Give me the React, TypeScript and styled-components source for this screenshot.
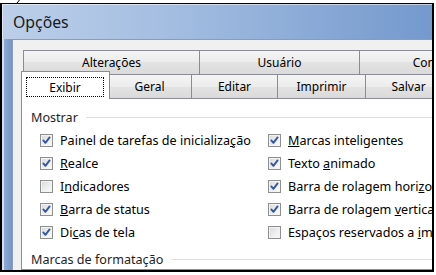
import React from "react";
import styled, { createGlobalStyle } from "styled-components";

const GlobalStyle = createGlobalStyle`
  html, body {
    margin: 0;
    padding: 0;
    background: #fff;
  }
  body {
    font-family: "Noto Sans", "Open Sans", sans-serif;
    font-size: 12px;
    color: #000;
  }
`;

const Screen = styled.div`
  width: 436px;
  height: 275px;
  overflow: hidden;
  background: #fff;
`;

const StrayMark = styled.svg`
  display: block;
  margin-left: 16px;
`;

const Frame = styled.div`
  width: 430px;
  height: 266px;
  border: 2px solid #000;
  border-top-width: 1px;
  overflow: hidden;
  display: flex;
  flex-direction: column;
  background: linear-gradient(90deg, #bccfe9 0%, #a3bde1 40%, #7499cd 100%);
`;

const TitleBar = styled.div`
  flex: none;
  height: 35px;
  display: flex;
  align-items: center;
  padding-left: 11px;
  font-size: 15.8px;
  color: #1a1a1a;
  box-shadow: inset 1px 1px 0 rgba(255, 255, 255, 0.55);
`;

const Body = styled.div`
  flex: 1;
  display: flex;
  min-height: 0;
`;

const SideEdge = styled.div`
  flex: none;
  width: 10px;
  background: linear-gradient(90deg, #d3dfef 0 2px, #8eaad5 2px, #7296ca 10px);
`;

const Client = styled.div`
  flex: 1;
  min-width: 0;
  background: #f0f0f0;
  border-left: 1px solid #8e9cb0;
  border-top: 1px solid #8e9cb0;
  padding: 10px 0 0 8px;
  display: flex;
  flex-direction: column;
`;

const TabStrip = styled.div`
  flex: 1;
  display: flex;
  flex-direction: column;
  min-height: 0;
`;

const TabRow = styled.div`
  flex: none;
  display: flex;
  height: 24px;
  padding-left: 2px;
`;

const Tab = styled.div<{ $w: number; $active?: boolean }>`
  flex: none;
  box-sizing: border-box;
  width: ${(p) => (p.$active ? p.$w + 4 : p.$w)}px;
  margin: ${(p) => (p.$active ? "-3px -3px -1px -2px" : "0 -1px 0 0")};
  position: relative;
  z-index: ${(p) => (p.$active ? 1 : 0)};
  border: 1px solid #898c95;
  border-bottom: none;
  background: ${(p) =>
    p.$active
      ? "#fff"
      : "linear-gradient(#f4f4f4 0%, #ececec 50%, #e3e3e3 50%, #dadada 100%)"};
  display: flex;
  justify-content: center;
  align-items: ${(p) => (p.$active ? "flex-start" : "center")};
  white-space: nowrap;
  overflow: hidden;
`;

const FocusRing = styled.span`
  box-sizing: border-box;
  width: calc(100% - 9px);
  height: 20px;
  margin-top: 5px;
  margin-left: -1px;
  border: 1px dotted #000;
  display: flex;
  align-items: center;
  justify-content: center;
`;

const Panel = styled.div`
  flex: 1;
  background: #fff;
  border: 1px solid #898c95;
  border-right: none;
  padding: 11px 0 0 9px;
  font-size: 12.6px;
`;

const GroupHeader = styled.div<{ $gap?: number }>`
  display: flex;
  align-items: center;
  height: 15px;
  line-height: 15px;
  margin-top: ${(p) => p.$gap ?? 0}px;
  color: #1e1e1e;
  white-space: nowrap;
`;

const Rule = styled.span`
  flex: 1;
  height: 1px;
  margin-left: 8px;
  background: #d5dfe5;
`;

const CheckGrid = styled.div`
  display: grid;
  grid-template-columns: 228px auto;
  margin-top: 4px;
  padding-left: 9px;
`;

const CheckRow = styled.label`
  display: flex;
  align-items: center;
  gap: 7px;
  height: 23px;
  white-space: nowrap;
`;

const Box = styled.span`
  flex: none;
  box-sizing: border-box;
  width: 13px;
  height: 13px;
  border: 1px solid #8e8f8f;
  background: linear-gradient(135deg, #d6d8db 0%, #eeeeee 55%, #fbfbfb 100%);
  box-shadow: inset 0 0 0 1px #f3f3f3;
  display: flex;
`;

const Check = styled.svg`
  display: block;
`;

type Item = { label: React.ReactNode; checked: boolean };

const leftItems: Item[] = [
  { label: <>Painel de tarefas de inicializa<u>ç</u>ão</>, checked: true },
  { label: <><u>R</u>ealce</>, checked: true },
  { label: <>I<u>n</u>dicadores</>, checked: false },
  { label: <><u>B</u>arra de status</>, checked: true },
  { label: <>Di<u>c</u>as de tela</>, checked: true },
];

const rightItems: Item[] = [
  { label: <><u>M</u>arcas inteligentes</>, checked: true },
  { label: <>Texto <u>a</u>nimado</>, checked: true },
  { label: <>Barra de rolagem hori<u>z</u>ontal</>, checked: true },
  { label: <>Barra de rolagem <u>v</u>ertical</>, checked: true },
  { label: <>Espaços reservados a <u>i</u>magens</>, checked: false },
];

const CheckBox: React.FC<Item> = ({ label, checked }) => (
  <CheckRow>
    <Box>
      {checked && (
        <Check width="11" height="11" viewBox="0 0 11 11">
          <path
            d="M2.3 5.4 L4.4 7.8 L8.6 2.4"
            fill="none"
            stroke="#3558a3"
            strokeWidth="1.9"
            strokeLinecap="round"
            strokeLinejoin="round"
          />
        </Check>
      )}
    </Box>
    <span>{label}</span>
  </CheckRow>
);

const backTabs = [
  { label: "Alterações", w: 177 },
  { label: "Usuário", w: 161 },
  { label: "Compatibilidade", w: 200 },
];

const frontTabs = [
  { label: "Exibir", w: 85 },
  { label: "Geral", w: 85 },
  { label: "Editar", w: 87 },
  { label: "Imprimir", w: 89 },
  { label: "Salvar", w: 87 },
];

const App: React.FC = () => {
  const rows = leftItems.map((item, i) => [item, rightItems[i]]);

  return (
    <Screen>
      <GlobalStyle />
      <StrayMark width="6" height="3" viewBox="0 0 6 3">
        <path d="M1 3 L3.5 0" stroke="#000" strokeWidth="1" />
      </StrayMark>
      <Frame>
        <TitleBar>Opções</TitleBar>
        <Body>
          <SideEdge />
          <Client>
            <TabStrip>
              <TabRow>
                {backTabs.map((t) => (
                  <Tab key={t.label} $w={t.w}>
                    {t.label}
                  </Tab>
                ))}
              </TabRow>
              <TabRow>
                {frontTabs.map((t, i) =>
                  i === 0 ? (
                    <Tab key={t.label} $w={t.w} $active>
                      <FocusRing>{t.label}</FocusRing>
                    </Tab>
                  ) : (
                    <Tab key={t.label} $w={t.w}>
                      {t.label}
                    </Tab>
                  )
                )}
              </TabRow>
              <Panel>
                <GroupHeader>
                  Mostrar
                  <Rule />
                </GroupHeader>
                <CheckGrid>
                  {rows.map(([l, r], i) => (
                    <React.Fragment key={i}>
                      <CheckBox {...l} />
                      <CheckBox {...r} />
                    </React.Fragment>
                  ))}
                </CheckGrid>
                <GroupHeader $gap={8}>
                  Marcas de formatação
                  <Rule />
                </GroupHeader>
              </Panel>
            </TabStrip>
          </Client>
        </Body>
      </Frame>
    </Screen>
  );
};

export default App;
